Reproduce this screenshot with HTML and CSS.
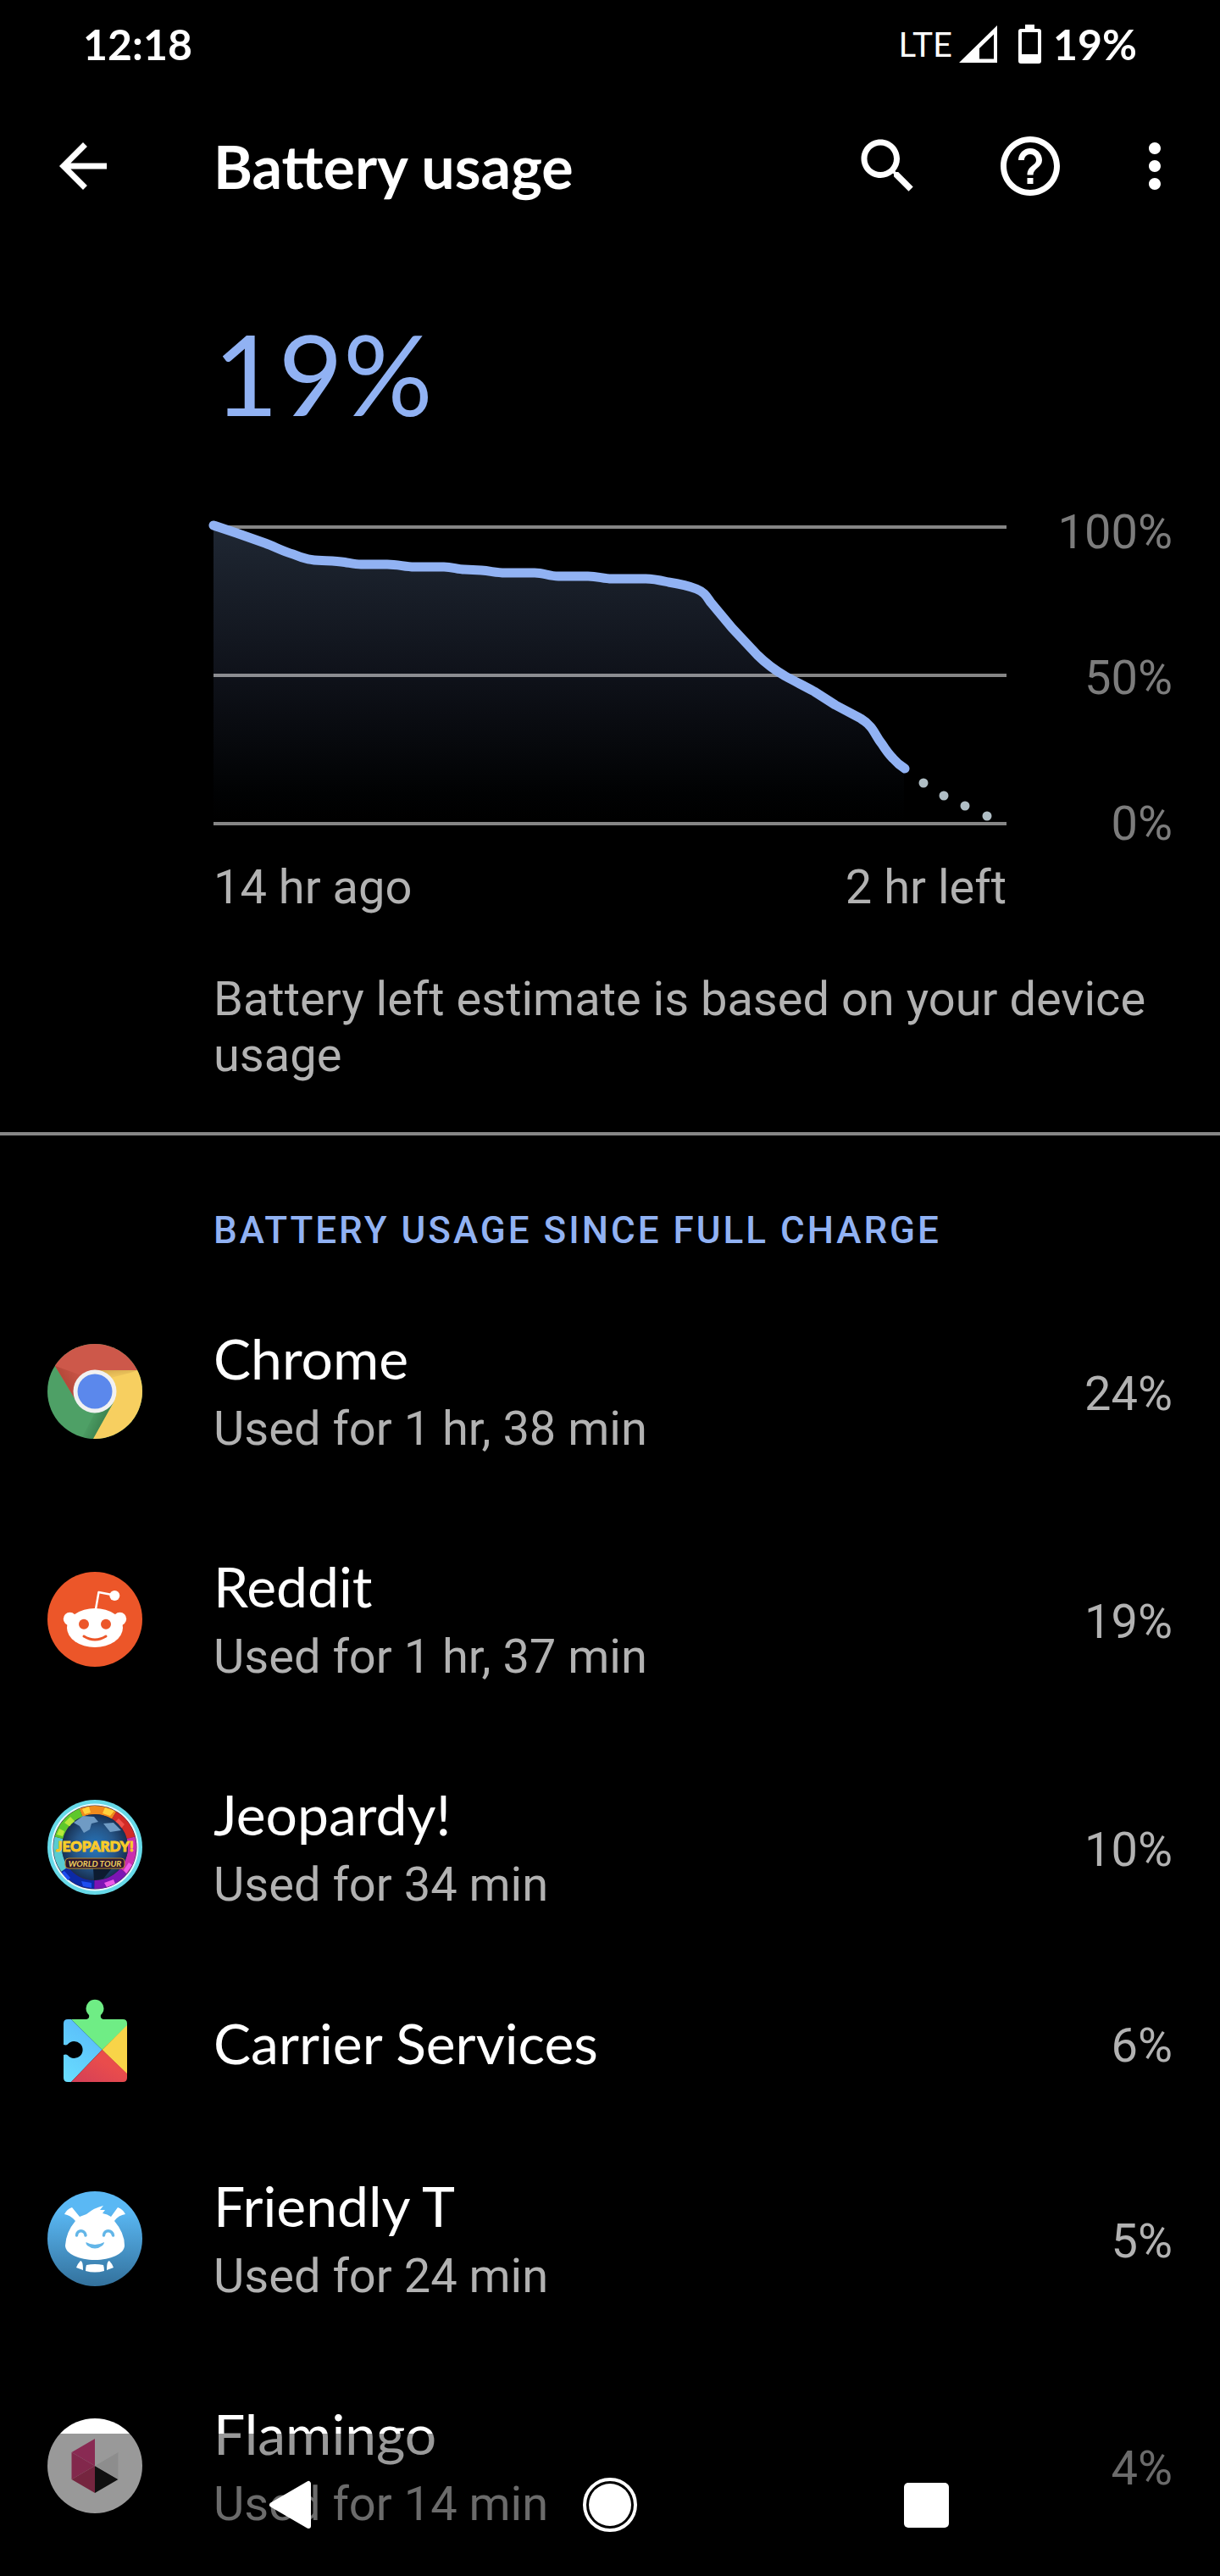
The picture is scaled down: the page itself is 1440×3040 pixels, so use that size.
FILE: index.html
```html
<!DOCTYPE html>
<html lang="en">
<head>
<meta charset="utf-8">
<meta name="viewport" content="width=device-width, initial-scale=1">
<title>Battery usage</title>
<link rel="stylesheet" href="styles.css">
</head>
<body>
<div class="status-bar">
  <span class="clock">12:18</span>
  <div class="status-icons">
    <span class="network">LTE</span>
    <svg class="signal" viewBox="0 0 45 44" aria-hidden="true"><path fill="#fff" fill-rule="evenodd" d="M45 0V44H0ZM41 10.500 24 27V39.500H41Z"/></svg>
    <svg class="battery" viewBox="0 0 27 46" aria-hidden="true"><path fill="#fff" fill-rule="evenodd" d="M8 0H19V5H24Q27 5 27 8V43Q27 46 24 46H3Q0 46 0 43V8Q0 5 3 5H8ZM4 9V35H23V9Z"/></svg>
    <span class="level">19%</span>
  </div>
</div>

<header class="app-bar">
  <button class="icon-button" type="button" aria-label="Back"><svg viewBox="0 0 24 24"><path d="M20 11H7.830l5.590-5.590L12 4l-8 8 8 8 1.410-1.410L7.830 13H20v-2z"/></svg></button>
  <h1>Battery usage</h1>
  <div class="actions">
    <button class="icon-button" type="button" aria-label="Search"><svg viewBox="0 0 24 24"><path d="M15.500 14h-.790l-.280-.270C15.410 12.590 16 11.110 16 9.500 16 5.910 13.090 3 9.500 3S3 5.910 3 9.500 5.910 16 9.500 16c1.610 0 3.090-.590 4.230-1.570l.270.280v.790l5 4.990L20.490 19l-4.990-5zm-6 0C7.010 14 5 11.990 5 9.500S7.010 5 9.500 5 14 7.010 14 9.500 11.990 14 9.500 14z"/></svg></button>
    <button class="icon-button" type="button" aria-label="Help"><svg viewBox="0 0 24 24"><path d="M11 18h2v-2h-2v2zm1-16C6.480 2 2 6.480 2 12s4.480 10 10 10 10-4.480 10-10S17.520 2 12 2zm0 18c-4.410 0-8-3.590-8-8s3.590-8 8-8 8 3.590 8 8-3.590 8-8 8zm0-14c-2.210 0-4 1.790-4 4h2c0-1.100.900-2 2-2s2 .900 2 2c0 2-3 1.750-3 5h2c0-2.250 3-2.500 3-5 0-2.210-1.790-4-4-4z"/></svg></button>
    <button class="icon-button more" type="button" aria-label="More options"><svg viewBox="0 0 24 24"><path d="M12 8c1.100 0 2-.900 2-2s-.900-2-2-2-2 .900-2 2 .900 2 2 2zm0 2c-1.100 0-2 .900-2 2s.900 2 2 2 2-.900 2-2-.900-2-2-2zm0 6c-1.100 0-2 .900-2 2s.900 2 2 2 2-.900 2-2-.900-2-2-2z"/></svg></button>
  </div>
</header>

<main>
  <section class="summary">
    <p class="percent">19%</p>
    <div class="chart">
      <div class="plot">
        <svg viewBox="0 0 936 354" role="img" aria-label="Battery level over time">
          <defs>
            <linearGradient id="area" x1="0" y1="0" x2="0" y2="1"><stop offset="0" stop-color="#1f2733"/><stop offset=".5" stop-color="#0f121a"/><stop offset=".9" stop-color="#010203"/><stop offset="1" stop-color="#000"/></linearGradient>
          </defs>
          <path fill="url(#area)" d="M0 0 61 21C72 25 83 31 94 34 108 40 116 41 128 41.500 140 42 146 42 155 43.500S168 46 174 46H205C218 46 226 49 237 49H272C282 49 288 52 296 52L316 53C328 54 334 56 344 56H379C390 56 396 60 407 60H442C454 60 460 63 470 63H510C520 63 528 65 537 67 550 69 560 71 570 75S582 84 587 91L612 121 642 153C652 163 663 171 675 178L709 196 734 212 764 228C780 238 780 247 789 258Q796 269 802 275L815 287V350H0Z"/>
          <path class="grid-line" d="M0 2H936M0 177H936M0 352H936"/>
          <path class="level-line" d="M0 0 27 9 61 21C72 25 83 31 94 34 108 40 116 41 128 41.500 140 42 146 42 155 43.500S168 46 174 46H205C218 46 226 49 237 49H272C282 49 288 52 296 52L316 53C328 54 334 56 344 56H379C390 56 396 60 407 60H442C454 60 460 63 470 63H510C520 63 528 65 537 67 550 69 560 71 570 75S582 84 587 91L612 121 642 153C652 163 663 171 675 178 686 184 698 190 709 196L734 212 764 228C780 238 780 247 789 258Q796 269 802 275 808 282 816 287"/>
          <g fill="#b0bec5"><circle cx="838" cy="304" r="5.500"/><circle cx="862" cy="319" r="5.500"/><circle cx="887" cy="331" r="5.500"/><circle cx="913" cy="343" r="5.500"/></g>
        </svg>
        <div class="time-axis"><span>14 hr ago</span><span>2 hr left</span></div>
      </div>
      <div class="level-axis"><span>100%</span><span>50%</span><span>0%</span></div>
    </div>
    <p class="note">Battery left estimate is based on your device usage</p>
  </section>

  <section class="usage">
    <h2>BATTERY USAGE SINCE FULL CHARGE</h2>
    <ul class="apps">
      <li class="app">
        <svg class="app-icon" viewBox="0 0 112 112" aria-hidden="true">
          <defs>
            <clipPath id="round"><circle cx="56" cy="56" r="56"/></clipPath>
            <linearGradient id="redShade" gradientUnits="userSpaceOnUse" x1="20" y1="50" x2="45" y2="36"><stop offset="0" stop-color="#b34738"/><stop offset="1" stop-color="#b34738" stop-opacity="0"/></linearGradient>
            <linearGradient id="greenShade" gradientUnits="userSpaceOnUse" x1="68" y1="90" x2="50" y2="82"><stop offset="0" stop-color="#3c8250"/><stop offset="1" stop-color="#3c8250" stop-opacity="0"/></linearGradient>
            <linearGradient id="yellowShade" gradientUnits="userSpaceOnUse" x1="80" y1="31" x2="82" y2="48"><stop offset="0" stop-color="#d9ad50"/><stop offset="1" stop-color="#f7cf60" stop-opacity="0"/></linearGradient>
          </defs>
          <g clip-path="url(#round)">
            <path fill="#4ea066" d="M0 0H112V112H0Z"/>
            <path fill="url(#greenShade)" d="M77 71 54 112H40L56 81Z"/>
            <path fill="#f7cf60" d="M56 31H112V112H54L78 69Z"/>
            <path fill="url(#yellowShade)" d="M56 31H107L98 34 75 40Z"/>
            <path fill="#cd584a" d="M0 12V0H112V31H56L32 64 9 26Z"/>
            <path fill="url(#redShade)" d="M9 26 32 64 40 37Z"/>
          </g>
          <circle cx="56" cy="56" r="25.500" fill="#f1f1f1"/><circle cx="56" cy="56" r="20.500" fill="#5b88ec"/>
        </svg>
        <div class="app-text"><h3>Chrome</h3><p>Used for 1 hr, 38 min</p></div>
        <span class="share">24%</span>
      </li>
      <li class="app">
        <svg class="app-icon" viewBox="0 0 112 112" aria-hidden="true">
          <circle cx="56" cy="56" r="56" fill="#ec5629"/>
          <g fill="#fff"><circle cx="26.500" cy="55.500" r="7.700"/><circle cx="85.500" cy="55.500" r="7.700"/><ellipse cx="56" cy="66" rx="33" ry="23"/><circle cx="79.300" cy="28" r="6"/></g>
          <path d="M57 44 60.500 24 76 27" fill="none" stroke="#fff" stroke-width="2.500" stroke-linejoin="round"/>
          <circle cx="43" cy="61.700" r="6" fill="#ec5629"/><circle cx="69" cy="61.700" r="6" fill="#ec5629"/>
          <path d="M43 76Q56 84 69 76" fill="none" stroke="#ec5629" stroke-width="3" stroke-linecap="round"/>
        </svg>
        <div class="app-text"><h3>Reddit</h3><p>Used for 1 hr, 37 min</p></div>
        <span class="share">19%</span>
      </li>
      <li class="app">
        <svg class="app-icon" viewBox="0 0 112 112" aria-hidden="true">
          <defs>
            <radialGradient id="globe"><stop offset="0" stop-color="#2576bd"/><stop offset=".6" stop-color="#26578a"/><stop offset="1" stop-color="#173052"/></radialGradient>
            <linearGradient id="gold" x1="0" y1="0" x2="0" y2="1"><stop offset="0" stop-color="#ffea38"/><stop offset="1" stop-color="#f3a81c"/></linearGradient>
          </defs>
          <circle cx="56" cy="56" r="56" fill="#66d9e8"/><circle cx="56" cy="56" r="51.500" fill="#e8fbff"/><circle cx="56" cy="56" r="49.500" fill="#3c2340"/>
          <g transform="rotate(-90 56 56)" fill="none" stroke-width="10">
            <circle cx="56" cy="56" r="44" pathLength="360" stroke="#f08a1c" stroke-dasharray="53 307" stroke-dashoffset="22"/>
            <circle cx="56" cy="56" r="44" pathLength="360" stroke="#d22b26" stroke-dasharray="44 316" stroke-dashoffset="-31"/>
            <circle cx="56" cy="56" r="44" pathLength="360" stroke="#c92fae" stroke-dasharray="55 305" stroke-dashoffset="-75"/>
            <circle cx="56" cy="56" r="44" pathLength="360" stroke="#7c15b4" stroke-dasharray="51 309" stroke-dashoffset="-130"/>
            <circle cx="56" cy="56" r="44" pathLength="360" stroke="#0b2aa6" stroke-dasharray="53 307" stroke-dashoffset="-181"/>
            <circle cx="56" cy="56" r="44" pathLength="360" stroke="#58cbd2" stroke-dasharray="51 309" stroke-dashoffset="-234"/>
            <circle cx="56" cy="56" r="44" pathLength="360" stroke="#5ec72b" stroke-dasharray="53 307" stroke-dashoffset="-285"/>
          </g>
          <path fill="#ffd23c" d="M41 11 49 8 51 15 44 17ZM68 9 79 13 74 19 65 16Z"/>
          <path fill="#b8e83a" d="M20 27 27 20 33 26 27 32ZM11 41 14 34 20 37 18 43Z"/>
          <path fill="#f0524a" d="M84 22 91 29 87 34 80 26Z"/><path fill="#ee5be8" d="M90 83 96 74 100 77 93 87ZM67 98 78 94 80 99 70 103Z"/><path fill="#1d4df0" d="M20 84 27 92 24 95 17 86ZM40 96 52 98 52 104 42 102Z"/>
          <circle cx="56" cy="56" r="39" fill="url(#globe)"/>
          <path fill="#6f9bc4" d="M31 27 42 19 55 20 60 26 52 28 50 35 43 39 38 31ZM66 28 78 27 87 36 74 38Z"/>
          <path fill="#0d1b30" d="M54 81H76L66 93 55 95Z"/>
          <text x="56" y="61" text-anchor="middle" class="logo-title">JEOPARDY!</text>
          <rect x="21" y="69" width="70" height="12" rx="4" fill="#2c1730" stroke="#b98a2a"/>
          <text x="56" y="79" text-anchor="middle" class="logo-tag">WORLD TOUR</text>
        </svg>
        <div class="app-text"><h3>Jeopardy!</h3><p>Used for 34 min</p></div>
        <span class="share">10%</span>
      </li>
      <li class="app compact">
        <svg class="app-icon" viewBox="0 0 112 112" aria-hidden="true">
          <defs>
            <linearGradient id="sky" x1="0" y1="1" x2=".6" y2="0"><stop offset="0" stop-color="#6be3ff"/><stop offset="1" stop-color="#5abdfa"/></linearGradient>
            <linearGradient id="ruby" x1="0" y1="1" x2="1" y2="0"><stop offset="0" stop-color="#d33f58"/><stop offset=".6" stop-color="#e94c4c"/></linearGradient>
            <clipPath id="piece"><path d="M24 28H46Q50 27 49 23A10.500 10.500 0 1 1 63 23Q62 27 66 28H89Q94 28 94 33V97Q94 102 89 102H24Q19 102 19 97V70Q22 69 24 70.500A10 10 0 1 0 24 57.500Q22 59 19 58V33Q19 28 24 28Z"/></clipPath>
          </defs>
          <g clip-path="url(#piece)">
            <path fill="#6fed85" d="M28 28V0H94V36L64.500 64Z"/><path fill="url(#sky)" d="M0 28H28L64.500 64 28 102H0Z"/><path fill="#f8d448" d="M94 35 64.500 64 94 93Z"/><path fill="url(#ruby)" d="M28 102 64.500 64 94 92V102Z"/>
          </g>
        </svg>
        <div class="app-text"><h3>Carrier Services</h3></div>
        <span class="share">6%</span>
      </li>
      <li class="app">
        <svg class="app-icon" viewBox="0 0 112 112" aria-hidden="true">
          <defs><linearGradient id="azure" x1="0" y1="0" x2="0" y2="1"><stop offset=".2" stop-color="#5ab8f4"/><stop offset="1" stop-color="#33719c"/></linearGradient></defs>
          <circle cx="56" cy="56" r="56" fill="url(#azure)"/>
          <g fill="#fff">
            <path d="M20 27Q23 21 29 19L38 30 46 27Q56 19 66 17L62 22 68 22 65 26Q71 27 75 30L83 19Q89 21 92 27 84 28 79 35 91 49 91 64C91 74 74 81 56 81S21 74 21 64Q22 48 33 35 27 28 20 27Z"/>
            <path d="M39 82Q42 82 42 93L34 90Q36 85 39 82ZM73 82Q70 82 70 93L78 90Q76 85 73 82ZM46 87Q56 85 66 87 67 90 67 94 56 97 45 94 45 90 46 87Z"/>
          </g>
          <path d="M34.500 52C35 45 44 45 45 52M66.500 52C67 45 76 45 77.500 52" fill="none" stroke="#63b6e8" stroke-width="3.500" stroke-linecap="round"/>
          <path fill="#63b6e8" d="M45.500 60Q56 66 67 60 67 62 65 64 56 71 47 64 45 62 45.500 60Z"/>
        </svg>
        <div class="app-text"><h3>Friendly T</h3><p>Used for 24 min</p></div>
        <span class="share">5%</span>
      </li>
      <li class="app">
        <svg class="app-icon" viewBox="0 0 112 112" aria-hidden="true">
          <circle cx="56" cy="56" r="56" fill="#fff"/>
          <path fill="#e4478b" d="M56 24V56L28.500 40Z"/><path fill="#d9437f" d="M28.500 40 56 56 28.500 72Z"/><path fill="#c43e69" d="M28.500 72 56 56V88Z"/><path fill="#1b1b1b" d="M56 56 83.500 72 56 88Z"/><path fill="#ebebeb" d="M83.500 40V72L56 56Z"/>
        </svg>
        <div class="app-text"><h3>Flamingo</h3><p>Used for 14 min</p></div>
        <span class="share">4%</span>
      </li>
    </ul>
  </section>
</main>

<nav class="system-nav" aria-label="System navigation">
  <button type="button" aria-label="Back"><svg viewBox="0 0 64 64"><path fill="#fff" stroke="#fff" stroke-width="6" stroke-linejoin="round" d="M6 32 49 7V57Z"/></svg></button>
  <button type="button" aria-label="Home"><svg viewBox="0 0 64 64"><circle cx="32" cy="32" r="30" fill="none" stroke="#fff" stroke-width="4"/><circle cx="32" cy="32" r="25" fill="#fff"/></svg></button>
  <button type="button" aria-label="Recent apps"><svg viewBox="0 0 64 64"><rect x="6" y="6" width="53" height="53" rx="5" fill="#fff"/></svg></button>
</nav>
</body>
</html>
```
FILE: styles.css
```css
* { box-sizing: border-box; }
body { margin: 0; background: #000; color: #fff; font-family: Roboto, "Liberation Sans", sans-serif; }
h1, h2, h3, p, ul { margin: 0; padding: 0; font-weight: 400; }
button { border: 0; padding: 0; background: none; color: inherit; }
svg { display: block; }

.status-bar { display: flex; justify-content: space-between; align-items: center; height: 104px; padding: 0 98px; font-family: Lato, sans-serif; font-size: 50px; font-weight: 700; }
.status-icons { display: flex; align-items: center; }
.network { font-size: 40px; font-weight: 400; margin-right: 8px; }
.signal { width: 45px; height: 44px; margin-right: 25px; }
.battery { width: 27px; height: 46px; margin-right: 14px; }

.app-bar { display: flex; align-items: center; height: 184px; padding: 0 35px 0 56px; }
.icon-button { width: 84px; height: 84px; }
.icon-button svg { width: 84px; height: 84px; fill: #fff; }
.app-bar h1 { flex: 1; margin-left: 112px; font-family: Lato, sans-serif; font-size: 70px; line-height: 84px; font-weight: 700; }
.actions { display: flex; gap: 84px; }
.more { margin-left: -21px; }

.summary { padding: 68px 56px 58px 252px; border-bottom: 4px solid #868686; font-size: 56px; line-height: 66px; color: #b2b2b2; }
.percent { font-family: Lato, sans-serif; font-size: 132px; line-height: 168px; color: #91b2f3; }
.chart { display: flex; align-items: flex-start; margin-top: 71px; }
.plot { flex: 1; padding-top: 25px; }
.plot svg { width: 100%; overflow: visible; }
.grid-line { stroke: #fff; stroke-opacity: .52; stroke-width: 4; }
.level-line { fill: none; stroke: #91b2f3; stroke-width: 11; stroke-linecap: round; stroke-linejoin: round; }
.time-axis { display: flex; justify-content: space-between; margin-top: 40px; }
.level-axis { display: flex; flex-direction: column; justify-content: space-between; width: 196px; height: 410px; text-align: right; color: #7c7c7c; }
.note { margin-top: 66px; }

.usage h2 { padding: 86px 56px 29px 252px; font-size: 44px; line-height: 52px; font-weight: 500; letter-spacing: 3px; color: #91b2f3; }
.apps { list-style: none; }
.app { display: flex; align-items: center; gap: 84px; height: 269px; padding: 0 56px; }
.app.compact { height: 193px; }
.app:last-child { align-items: flex-start; height: auto; padding: 58px 56px 48px; }
.app:last-child .app-icon, .app:last-child .share { margin-top: 20px; }
.app:last-child .share { margin-top: 40px; }
.app-icon { flex: none; width: 112px; height: 112px; }
.app-text { display: flex; flex: 1; flex-direction: column; gap: 12px; }
.app-text h3 { font-family: Lato, sans-serif; font-size: 66px; line-height: 76px; }
.app-text p, .share { font-size: 56px; line-height: 66px; color: #b2b2b2; }
.share { padding-top: 6px; }
.logo-title { font: 900 17px Lato, sans-serif; fill: url(#gold); stroke: #f9c928; stroke-width: 1; }
.logo-tag { font: italic 700 10px Lato, sans-serif; fill: #f0cf5a; }

.system-nav { position: fixed; left: 0; right: 0; bottom: 0; display: flex; justify-content: center; gap: 309px; align-items: center; height: 168px; background: rgba(0, 0, 0, .4); }
.system-nav button, .system-nav svg { width: 64px; height: 64px; }
```
